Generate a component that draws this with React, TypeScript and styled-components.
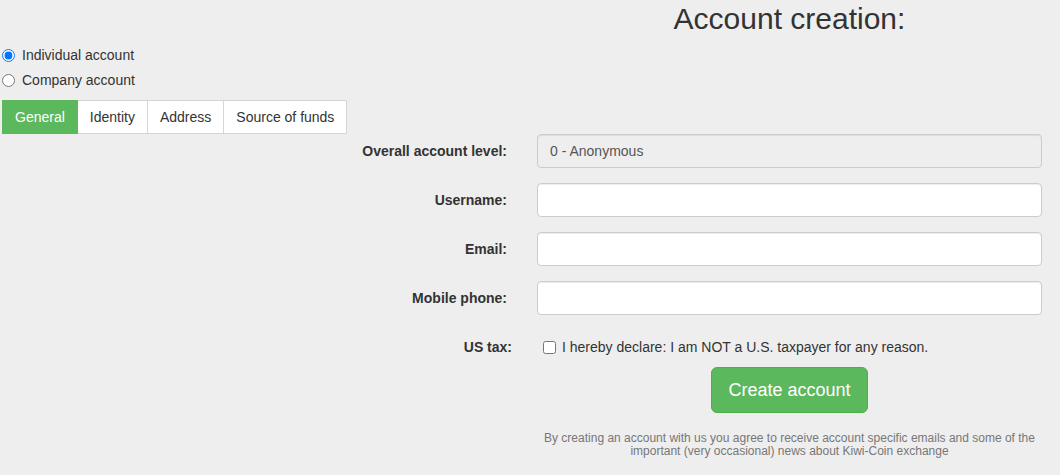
import { useState } from "react";
import styled, { createGlobalStyle } from "styled-components";

const GlobalStyle = createGlobalStyle`
  html, body {
    margin: 0;
    padding: 0;
    background: #eeeeee;
  }
  body {
    font-family: "Liberation Sans", Arial, sans-serif;
    font-size: 14px;
    line-height: 20px;
    color: #333333;
  }
`;

const Page = styled.div`
  width: 1060px;
  height: 475px;
  overflow: hidden;
`;

const TitleRow = styled.div`
  display: flex;
  padding-left: 537px;
  padding-top: 2px;
`;

const Title = styled.h1`
  width: 505px;
  margin: 0;
  text-align: center;
  font-size: 30px;
  line-height: 33px;
  font-weight: normal;
  color: #333;
`;

const Radios = styled.div`
  display: flex;
  flex-direction: column;
  gap: 5px;
  margin-top: 10px;
`;

const RadioLabel = styled.label`
  display: flex;
  align-items: center;
  height: 20px;
  cursor: pointer;
`;

const RadioInput = styled.input`
  width: 13px;
  height: 13px;
  margin: 0 7px 0 2px;
`;

const Tabs = styled.div`
  display: flex;
  margin: 10px 0 0 2px;
`;

const Tab = styled.button<{ $active?: boolean }>`
  font-family: "Liberation Sans", Arial, sans-serif;
  font-size: 14px;
  line-height: 20px;
  padding: 6px 12px;
  border: 1px solid ${(p) => (p.$active ? "#5cb85c" : "#d6d6d6")};
  border-left-width: ${(p) => (p.$active ? "1px" : "0")};
  background: ${(p) => (p.$active ? "#5cb85c" : "#fff")};
  color: ${(p) => (p.$active ? "#fff" : "#333")};
  cursor: pointer;
`;

const Form = styled.div`
  display: grid;
  grid-template-columns: 507px 505px;
  column-gap: 30px;
  row-gap: 15px;
`;

const Label = styled.label<{ $shift?: number; $top?: boolean }>`
  display: flex;
  align-items: ${(p) => (p.$top ? "flex-start" : "center")};
  justify-content: flex-end;
  padding-top: ${(p) => (p.$top ? "7px" : "0")};
  font-weight: bold;
  margin-right: ${(p) => -(p.$shift || 0)}px;
`;

const Input = styled.input`
  box-sizing: border-box;
  width: 100%;
  height: 34px;
  padding: 6px 12px;
  font-family: "Liberation Sans", Arial, sans-serif;
  font-size: 14px;
  color: #555;
  background: #fff;
  border: 1px solid #ccc;
  border-radius: 4px;
  box-shadow: inset 0 1px 1px rgba(0, 0, 0, 0.075);
  outline: none;
  &:disabled {
    background: #eeeeee;
    color: #555;
  }
`;

const CheckRow = styled.label`
  display: flex;
  align-items: center;
  height: 20px;
  margin-top: 7px;
  cursor: pointer;
`;

const Check = styled.input`
  width: 13px;
  height: 13px;
  margin: 0 6px 0 6px;
`;

const Actions = styled.div`
  display: flex;
  flex-direction: column;
  align-items: center;
  margin-top: -5px;
`;

const CreateButton = styled.button`
  font-family: "Liberation Sans", Arial, sans-serif;
  font-size: 18px;
  line-height: 24px;
  padding: 10px 16px;
  color: #fff;
  background: #5cb85c;
  border: 1px solid #4cae4c;
  border-radius: 6px;
  cursor: pointer;
`;

const Note = styled.p`
  margin: 19px 0 0;
  font-size: 12px;
  line-height: 13px;
  color: #777;
  text-align: center;
`;

const tabs = ["General", "Identity", "Address", "Source of funds"];

export default function App() {
  const [kind, setKind] = useState("individual");
  const [tab, setTab] = useState(0);

  return (
    <Page>
      <GlobalStyle />
      <TitleRow>
        <Title>Account creation:</Title>
      </TitleRow>
      <Radios>
        <RadioLabel>
          <RadioInput
            type="radio"
            name="kind"
            checked={kind === "individual"}
            onChange={() => setKind("individual")}
          />
          Individual account
        </RadioLabel>
        <RadioLabel>
          <RadioInput
            type="radio"
            name="kind"
            checked={kind === "company"}
            onChange={() => setKind("company")}
          />
          Company account
        </RadioLabel>
      </Radios>
      <Tabs>
        {tabs.map((t, i) => (
          <Tab key={t} $active={tab === i} onClick={() => setTab(i)}>
            {t}
          </Tab>
        ))}
      </Tabs>
      <Form>
        <Label>Overall account level:</Label>
        <Input disabled value="0 - Anonymous" readOnly />
        <Label>Username:</Label>
        <Input type="text" />
        <Label>Email:</Label>
        <Input type="email" />
        <Label>Mobile phone:</Label>
        <Input type="tel" />
        <Label $shift={5} $top>
          US tax:
        </Label>
        <CheckRow>
          <Check type="checkbox" />I hereby declare: I am NOT a U.S. taxpayer for
          any reason.
        </CheckRow>
        <div />
        <Actions>
          <CreateButton>Create account</CreateButton>
          <Note>
            By creating an account with us you agree to receive account specific
            emails and some of the important (very occasional) news about
            Kiwi-Coin exchange
          </Note>
        </Actions>
      </Form>
    </Page>
  );
}
